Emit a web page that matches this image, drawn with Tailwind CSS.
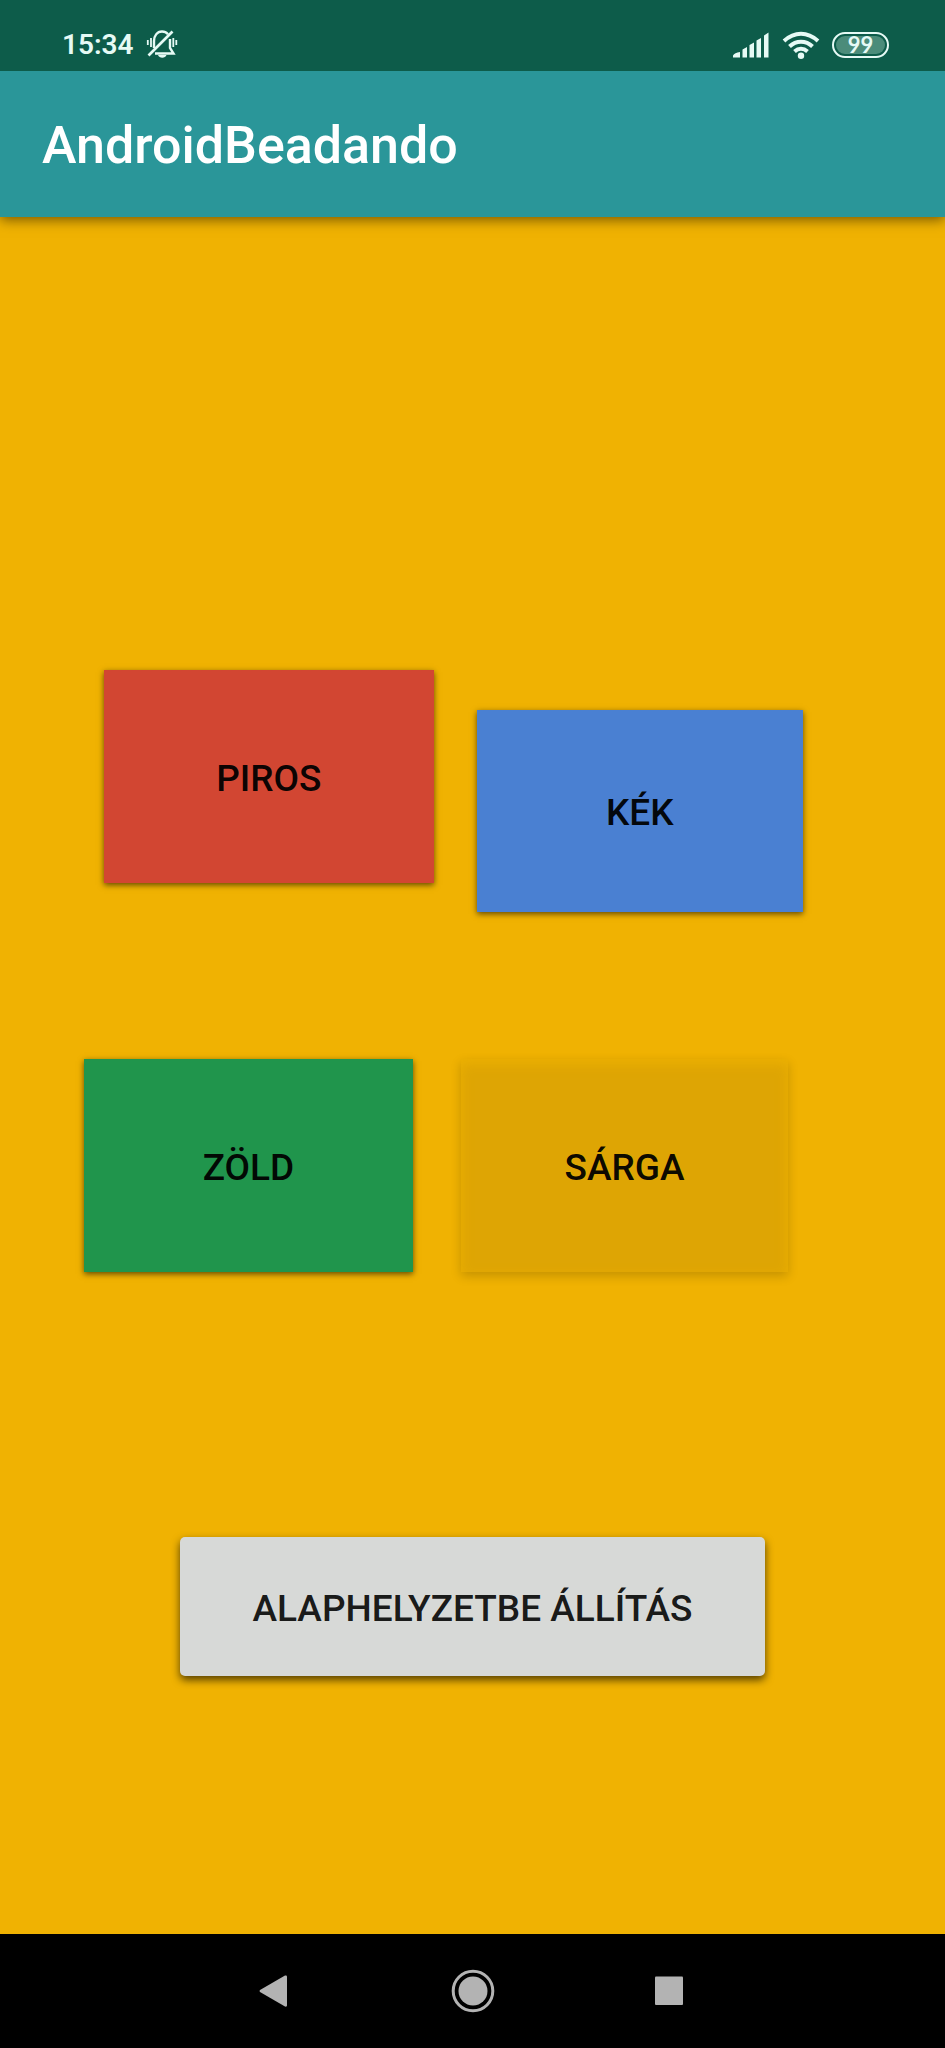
<!DOCTYPE html>
<html lang="hu">
<head>
<meta charset="utf-8">
<meta name="viewport" content="width=device-width, initial-scale=1">
<title>AndroidBeadando</title>
<script src="https://cdn.jsdelivr.net/npm/@tailwindcss/browser@4"></script>
</head>
<body class="flex min-h-screen flex-col bg-[#f0b202] font-['Roboto',sans-serif]">

<!-- Status bar -->
<div class="relative z-10 flex h-[71px] shrink-0 items-end justify-between bg-[#0d5c4a] pr-14 pl-[62px] pb-2.5 text-[#e6faf5]">
  <div class="flex items-center gap-3">
    <span class="pt-0.5 text-[28px] leading-8 font-semibold">15:34</span>
    <svg class="h-8 w-8" viewBox="0 0 32 32" fill="none" stroke="currentColor" stroke-width="2.400" role="img" aria-label="Néma">
      <path d="M8 20V13c0-5 3-9.500 8-9.500 2.500 0 4.500 1 6 2.800M24 11v9l3.500 5.500H9"/>
      <path d="M2.500 27.500L26.500 3.500" stroke-width="2.600"/>
      <path d="M5 10v9M1.800 12v5M27.300 10v9M30.300 12v5" stroke-width="1.800"/>
      <path d="M12 27h8.500c-.8 1.800-2.200 2.800-4.200 2.800S12.800 28.800 12 27z" fill="currentColor" stroke="none"/>
    </svg>
  </div>
  <div class="flex items-center gap-3 pb-0.5">
    <svg class="h-7 w-[38px]" viewBox="0 0 38 28" fill="currentColor" role="img" aria-label="Térerő">
      <path d="M1 26.500V24.500Q2.500 21.500 8 21V26.500zM10.500 26.500V18.500L15 16V26.500zM17.500 26.500V14L22 11.500V26.500zM24.500 26.500V9.500L29 7V26.500zM32 26.500V4.500L36.500 1.500V26.500z"/>
    </svg>
    <svg class="h-7 w-[38px]" viewBox="0 0 38 28" fill="none" stroke="currentColor" stroke-width="4" role="img" aria-label="Wi-Fi">
      <path d="M2 10Q10 2.800 19 2.800T36 10"/>
      <path d="M7.500 15.500Q12.500 10.700 19 10.700T30.500 15.500"/>
      <path d="M12.500 20.500Q15.500 17.800 19 17.800T25.500 20.500"/>
      <circle cx="19" cy="24.700" r="3.200" fill="currentColor" stroke="none"/>
    </svg>
    <div class="flex h-[26px] w-[57px] items-center rounded-full border-2 border-[#e6faf5] p-0.5">
      <span class="flex h-full w-full items-center justify-center rounded-full bg-[#4b8c7a] font-['Lato',sans-serif] text-[22px] leading-none font-bold">99</span>
    </div>
  </div>
</div>

<!-- App bar -->
<header class="flex h-[146px] shrink-0 items-center bg-[#2a9699] px-[42px] pt-1 shadow-[0_3px_12px_rgba(0,0,0,0.500)]">
  <h1 class="text-[52px] leading-[62px] font-medium text-white">AndroidBeadando</h1>
</header>

<main class="flex grow flex-col pt-[453px] text-[37px] text-black/95">
  <div class="flex items-start gap-[43px] pl-[11%]">
    <button type="button" class="h-[213px] w-[39.200%] bg-[#d24632] pt-1 font-medium shadow-[0_2px_6px_rgba(0,0,0,0.600)]">PIROS</button>
    <button type="button" class="mt-10 h-[202px] w-[38.800%] bg-[#4a80d2] pt-1 font-medium shadow-[0_2px_6px_rgba(0,0,0,0.600)]">KÉK</button>
  </div>
  <div class="mt-[147px] flex gap-12 pl-[8.900%]">
    <button type="button" class="h-[213px] w-[38.200%] bg-[#20954c] pt-1 font-medium shadow-[0_2px_6px_rgba(0,0,0,0.600)]">ZÖLD</button>
    <button type="button" class="h-[213px] w-[38%] bg-[#dea504] pt-1 font-medium shadow-[0_4px_10px_rgba(0,0,0,0.180),inset_0_5px_12px_#ecb002]">SÁRGA</button>
  </div>
  <button type="button" class="mt-[265px] mb-16 h-[139px] w-[62%] self-center rounded-[5px] bg-[#d7d9d7] pt-1 font-medium text-black/90 shadow-[0_4px_8px_rgba(0,0,0,0.650)]">ALAPHELYZETBE ÁLLÍTÁS</button>
</main>

<!-- Navigation bar -->
<nav class="flex h-[114px] shrink-0 justify-center bg-black text-[#b3b3b3]">
  <button type="button" aria-label="Vissza" class="flex w-[197px] items-center justify-center">
    <svg class="h-11 w-11" viewBox="0 0 44 44" fill="currentColor"><path d="M6 21Q5 22 6 23L31 37.500Q33 38 33 36.500V7.500Q33 6 31 6.500z"/></svg>
  </button>
  <button type="button" aria-label="Kezdőképernyő" class="flex w-[197px] items-center justify-center">
    <svg class="h-11 w-11" viewBox="0 0 44 44" fill="currentColor"><circle cx="22" cy="22" r="14.500"/><circle cx="22" cy="22" r="19.800" fill="none" stroke="currentColor" stroke-width="3"/></svg>
  </button>
  <button type="button" aria-label="Legutóbbiak" class="flex w-[197px] items-center justify-center">
    <svg class="h-11 w-11" viewBox="0 0 44 44" fill="currentColor"><rect x="7" y="7.500" width="28" height="28.500" rx="1"/></svg>
  </button>
</nav>
</body>
</html>
